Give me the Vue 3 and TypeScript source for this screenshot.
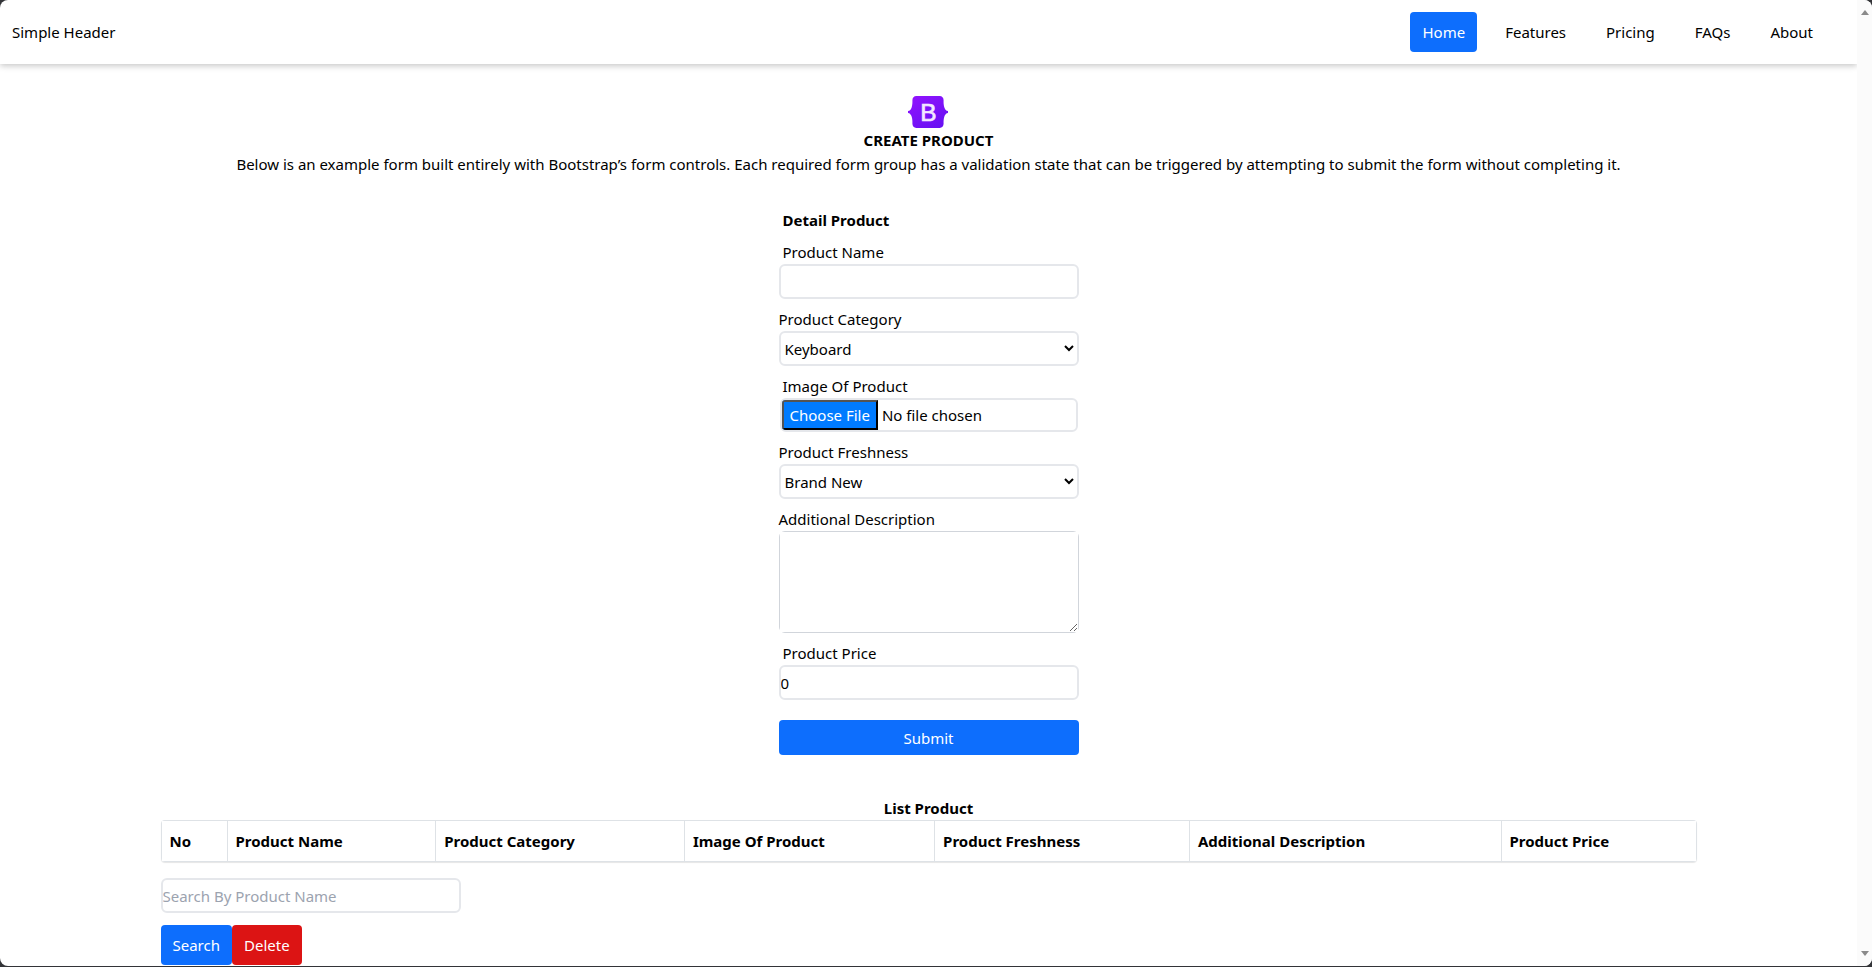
<script setup lang="ts">
import { ref } from 'vue'

interface Column {
  label: string
  share: string
}

const navItems: string[] = ['Home', 'Features', 'Pricing', 'FAQs', 'About']
const activeItem = ref('Home')

const categories: string[] = ['Keyboard', 'Mouse', 'Monitor']
const freshnessOptions: string[] = ['Brand New', 'Second Hand', 'Refurbished']

const productName = ref('')
const category = ref('Keyboard')
const freshness = ref('Brand New')
const description = ref('')
const price = ref(0)
const search = ref('')

const columns: Column[] = [
  { label: 'No', share: '4.3%' },
  { label: 'Product Name', share: '13.6%' },
  { label: 'Product Category', share: '16.2%' },
  { label: 'Image Of Product', share: '16.3%' },
  { label: 'Product Freshness', share: '16.6%' },
  { label: 'Additional Description', share: '20.3%' },
  { label: 'Product Price', share: '12.7%' },
]
</script>

<template>
  <div class="window">
    <div class="frame">
      <div class="page">
        <header class="header">
          <span>Simple Header</span>
          <nav class="nav">
            <a
              v-for="item in navItems"
              :key="item"
              href="#"
              class="nav-link"
              :class="{ active: item === activeItem }"
              @click.prevent="activeItem = item"
            >{{ item }}</a>
          </nav>
        </header>

        <main class="main">
          <section class="intro">
            <svg class="logo" viewBox="0 0 118 94" aria-hidden="true">
              <defs>
                <linearGradient id="logo-fill" x1="0.15" y1="0" x2="0.85" y2="1">
                  <stop offset="0" stop-color="#9013fe" />
                  <stop offset="1" stop-color="#6610f2" />
                </linearGradient>
              </defs>
              <path
                fill="url(#logo-fill)"
                d="M24.509 0c-6.733 0-11.715 5.893-11.492 12.284.214 6.14-.064 14.092-2.066 20.577C8.943 39.365 5.547 43.485 0 44.014v5.972c5.547.529 8.943 4.649 10.951 11.153 2.002 6.485 2.28 14.437 2.066 20.577C12.794 88.106 17.776 94 24.51 94H93.5c6.733 0 11.714-5.893 11.491-12.284-.214-6.14.064-14.092 2.066-20.577 2.009-6.504 5.396-10.624 10.943-11.153v-5.972c-5.547-.529-8.934-4.649-10.943-11.153-2.002-6.484-2.28-14.437-2.066-20.577C105.214 5.894 100.233 0 93.5 0H24.508z"
              />
              <text class="logo-letter" x="60" y="73" text-anchor="middle">B</text>
            </svg>
            <h1 class="title">CREATE PRODUCT</h1>
            <p class="lead">
              Below is an example form built entirely with Bootstrap’s form controls. Each required form group has a validation state that can be triggered by attempting to submit the form without completing it.
            </p>
          </section>

          <form class="form" @submit.prevent>
            <h2 class="title indent">Detail Product</h2>
            <div class="field">
              <label class="indent" for="name">Product Name</label>
              <input id="name" v-model="productName" class="control" type="text" />
            </div>
            <div class="field">
              <label for="category">Product Category</label>
              <select id="category" v-model="category" class="control">
                <option v-for="option in categories" :key="option">{{ option }}</option>
              </select>
            </div>
            <div class="field">
              <label class="indent" for="image">Image Of Product</label>
              <input id="image" class="control file" type="file" />
            </div>
            <div class="field">
              <label for="freshness">Product Freshness</label>
              <select id="freshness" v-model="freshness" class="control">
                <option v-for="option in freshnessOptions" :key="option">{{ option }}</option>
              </select>
            </div>
            <div class="field">
              <label for="description">Additional Description</label>
              <div class="area-clip">
                <textarea id="description" v-model="description" class="area"></textarea>
              </div>
            </div>
            <div class="field">
              <label class="indent" for="price">Product Price</label>
              <input id="price" v-model="price" class="control" type="number" />
            </div>
            <button class="submit" type="submit">Submit</button>
          </form>

          <section class="list">
            <h2 class="title centered">List Product</h2>
            <div class="table-clip">
              <table class="table">
                <colgroup>
                  <col v-for="column in columns" :key="column.label" :style="{ width: column.share }" />
                </colgroup>
                <thead>
                  <tr>
                    <th v-for="column in columns" :key="column.label" scope="col">{{ column.label }}</th>
                  </tr>
                </thead>
              </table>
            </div>
            <input
              v-model="search"
              class="control search"
              type="text"
              placeholder="Search By Product Name"
              aria-label="Search By Product Name"
            />
            <div class="actions">
              <button class="button" type="button">Search</button>
              <button class="button danger" type="button">Delete</button>
            </div>
          </section>
        </main>
      </div>

      <div class="scrollbar" aria-hidden="true">
        <svg class="arrow" viewBox="0 0 8 5"><path d="M4 0 8 5H0z" /></svg>
        <svg class="arrow" viewBox="0 0 8 5"><path d="M4 5 0 0h8z" /></svg>
      </div>
    </div>
  </div>
</template>

<style>
body {
  margin: 0;
}
</style>

<style scoped>
.window,
.window * {
  box-sizing: border-box;
}

.window {
  min-height: 100vh;
  display: flex;
  padding-bottom: 1px;
  background: #333438;
  color: #000;
  font-family: 'Noto Sans', 'Open Sans', sans-serif;
  font-size: 15px;
  line-height: 24px;
}

.frame {
  flex: 1;
  display: flex;
  background: #fff;
  border-radius: 8px;
  overflow: hidden;
}

.page {
  flex: 1;
  min-width: 0;
  overflow: hidden;
}

.header {
  display: flex;
  justify-content: space-between;
  align-items: center;
  padding: 12px 32px 12px 12px;
  box-shadow: 0 2px 6px rgba(0, 0, 0, 0.22);
}

.nav {
  display: flex;
  gap: 16px;
}

.nav-link {
  padding: 8px 12px;
  border-radius: 4px;
  color: #000;
  text-decoration: none;
}

.nav-link.active {
  background: #0d6efd;
  color: #fff;
}

.main {
  display: flex;
  flex-direction: column;
  align-items: center;
  padding-top: 32px;
}

.intro {
  display: flex;
  flex-direction: column;
  align-items: center;
}

.logo {
  display: block;
  width: 40px;
  height: 32px;
}

.logo-letter {
  fill: #f3e8ff;
  stroke: #f3e8ff;
  stroke-width: 2;
  font-family: 'Liberation Sans', sans-serif;
  font-size: 72px;
}

.title,
.lead {
  margin: 0;
  font-size: inherit;
}

.title {
  font-weight: 700;
}

.centered {
  text-align: center;
}

.form {
  display: flex;
  flex-direction: column;
  gap: 8px;
  width: 300px;
  margin-top: 32px;
}

.field {
  display: flex;
  flex-direction: column;
}

.indent {
  padding-left: 4px;
}

.control {
  height: 35px;
  margin: 0;
  padding: 0;
  border: 2px solid #e5e7eb;
  border-radius: 6px;
  background: #fff;
  color: #000;
  font: inherit;
}

.control::placeholder {
  color: #9ca3af;
}

.file {
  height: 34px;
  margin: 0 1px;
}

.file::file-selector-button {
  height: 30px;
  margin: 0 4px 0 0;
  padding: 0 6px;
  border: 2px outset #000;
  border-radius: 0;
  background: #007bff;
  color: #fff;
  font: inherit;
}

.area-clip {
  display: flex;
  border-radius: 6px;
  overflow: hidden;
}

.area {
  flex: 1;
  height: 102px;
  padding: 8px;
  border: 1px solid #d1d5db;
  font: inherit;
  resize: vertical;
}

.submit,
.button {
  border: 0;
  border-radius: 4px;
  background: #0d6efd;
  color: #fff;
  font: inherit;
}

.submit {
  height: 35px;
  margin-top: 12px;
}

.list {
  width: 100%;
  max-width: 1536px;
  margin-top: 41px;
}

.table-clip {
  border-radius: 4px;
  overflow: hidden;
  box-shadow: 0 1px 1px rgba(0, 0, 0, 0.1);
}

.table {
  width: 100%;
  border-collapse: collapse;
  table-layout: fixed;
}

.table th {
  padding: 8px;
  border: 1px solid #dee2e6;
  text-align: left;
  white-space: nowrap;
}

.search {
  display: block;
  width: 300px;
  margin-top: 16px;
}

.actions {
  display: flex;
  margin-top: 12px;
}

.button {
  padding: 8px 12px;
}

.danger {
  background: #dc1414;
}

.scrollbar {
  display: flex;
  flex-direction: column;
  justify-content: space-between;
  align-items: center;
  width: 15px;
  padding: 10px 0;
  background: #fbfbfb;
}

.arrow {
  width: 8px;
  height: 5px;
  fill: #8a8a8a;
}
</style>
